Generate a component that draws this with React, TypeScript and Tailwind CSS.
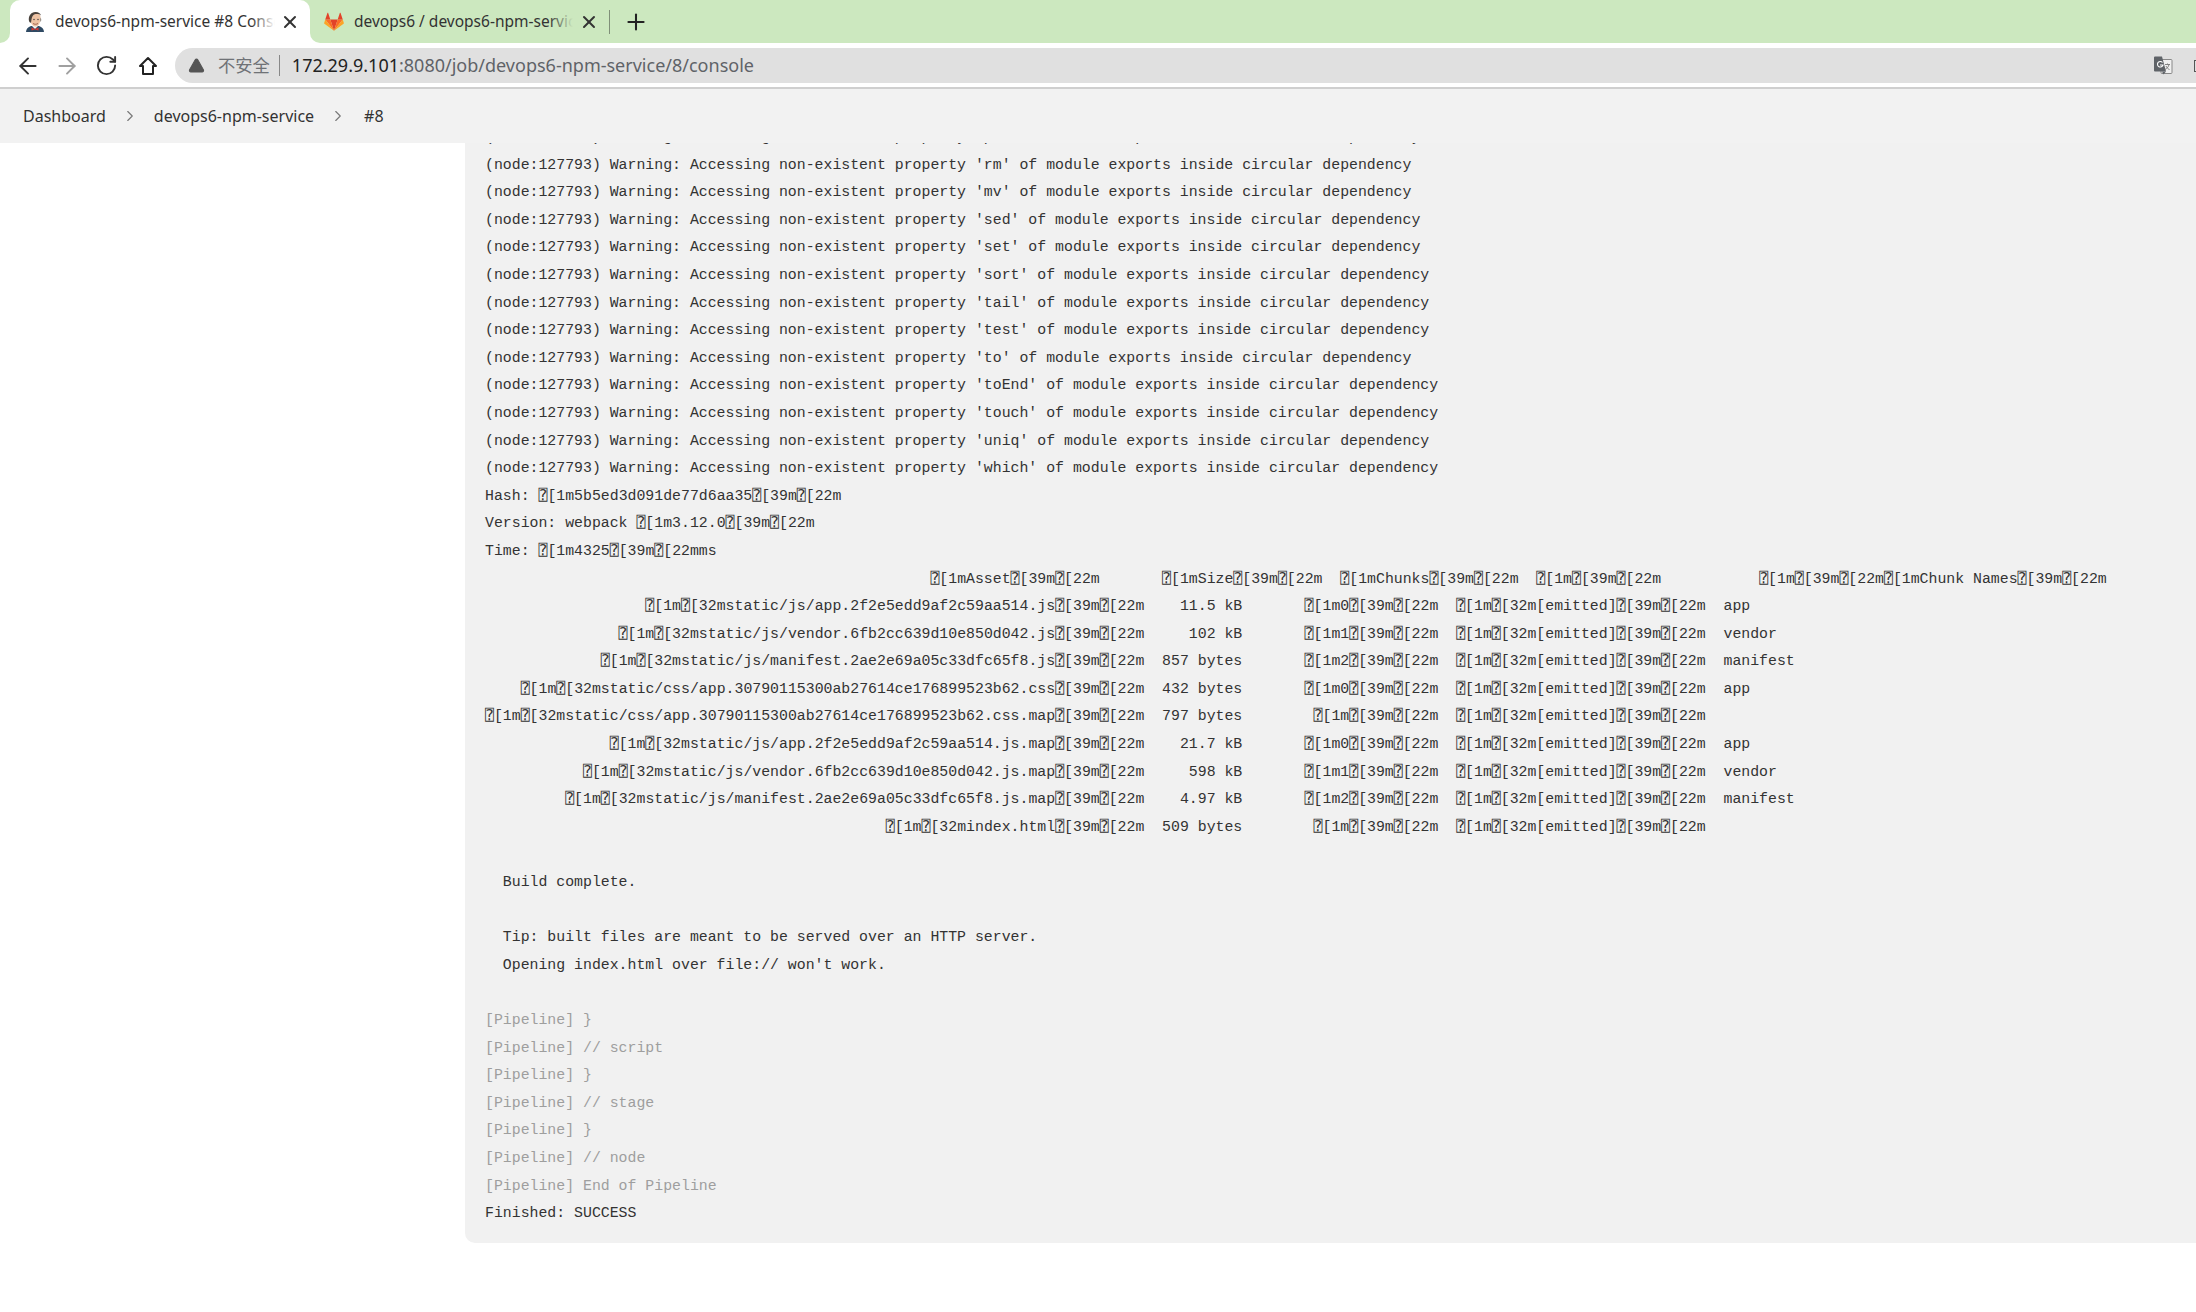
import { ArrowLeft, ArrowRight, RotateCw, X, Plus, ChevronRight, TriangleAlert } from "lucide-react";

const E = "\u2370";
const warn = (p: string) =>
  `(node:127793) Warning: Accessing non-existent property '${p}' of module exports inside circular dependency`;
const row = (asset: string, size: string, chunk: string, name: string) => {
  const a = `${E}[1m${E}[32m${asset}${E}[39m${E}[22m`.padStart(74, " ");
  const c = chunk === "" ? ` ${E}[1m${E}[39m${E}[22m` : `${E}[1m${chunk}${E}[39m${E}[22m`;
  return `${a}  ${size.padStart(9, " ")}       ${c}  ${E}[1m${E}[32m[emitted]${E}[39m${E}[22m${name ? "  " + name : ""}`;
};

type Line = { t: string; dim?: boolean };
const lines: Line[] = [
  ...["pwd", "rm", "mv", "sed", "set", "sort", "tail", "test", "to", "toEnd", "touch", "uniq", "which"].map((p) => ({ t: warn(p) })),
  { t: `Hash: ${E}[1m5b5ed3d091de77d6aa35${E}[39m${E}[22m` },
  { t: `Version: webpack ${E}[1m3.12.0${E}[39m${E}[22m` },
  { t: `Time: ${E}[1m4325${E}[39m${E}[22mms` },
  {
    t: `${" ".repeat(50)}${E}[1mAsset${E}[39m${E}[22m       ${E}[1mSize${E}[39m${E}[22m  ${E}[1mChunks${E}[39m${E}[22m  ${E}[1m${E}[39m${E}[22m           ${E}[1m${E}[39m${E}[22m${E}[1mChunk Names${E}[39m${E}[22m`,
  },
  { t: row("static/js/app.2f2e5edd9af2c59aa514.js", "11.5 kB", "0", "app") },
  { t: row("static/js/vendor.6fb2cc639d10e850d042.js", "102 kB", "1", "vendor") },
  { t: row("static/js/manifest.2ae2e69a05c33dfc65f8.js", "857 bytes", "2", "manifest") },
  { t: row("static/css/app.30790115300ab27614ce176899523b62.css", "432 bytes", "0", "app") },
  { t: row("static/css/app.30790115300ab27614ce176899523b62.css.map", "797 bytes", "", "") },
  { t: row("static/js/app.2f2e5edd9af2c59aa514.js.map", "21.7 kB", "0", "app") },
  { t: row("static/js/vendor.6fb2cc639d10e850d042.js.map", "598 kB", "1", "vendor") },
  { t: row("static/js/manifest.2ae2e69a05c33dfc65f8.js.map", "4.97 kB", "2", "manifest") },
  { t: row("index.html", "509 bytes", "", "") },
  { t: " " },
  { t: "  Build complete." },
  { t: " " },
  { t: "  Tip: built files are meant to be served over an HTTP server." },
  { t: "  Opening index.html over file:// won't work." },
  { t: " " },
  { t: "[Pipeline] }", dim: true },
  { t: "[Pipeline] // script", dim: true },
  { t: "[Pipeline] }", dim: true },
  { t: "[Pipeline] // stage", dim: true },
  { t: "[Pipeline] }", dim: true },
  { t: "[Pipeline] // node", dim: true },
  { t: "[Pipeline] End of Pipeline", dim: true },
  { t: "Finished: SUCCESS" },
];

function Jenkins() {
  return (
    <svg width="18" height="20" viewBox="0 0 18 20" className="shrink-0">
      <path d="M0 20c0-3 2-5 5-6h8c3 1 5 3 5 6z" fill="#2f4a63" />
      <path d="M6 14l3 3 3-3z" fill="#f4f4f4" />
      <path d="M5.500 15.500L9 17l3.500-1.500V18.500L9 17.500l-3.500 1z" fill="#d33833" />
      <path d="M4 6c0-3.500 2.500-5.500 5.500-5.500S15 3 14.500 7 13 14 9.500 14.500C6 14.500 4 10 4 6z" fill="#eec3a4" />
      <path d="M3 9C2 4 5 0 9.500 0 12.500 0 14.500 1.500 15 3.500 13 1.800 9 1.500 7 3.500 5.500 5 5.500 8 5 10.500 4 11 3.300 10 3 9z" fill="#49423c" />
      <path d="M14.500 5.500c1 1.500.8 3.500 0 4.500z" fill="#49423c" />
      <path d="M7 11.500c1.500 1 3.500 1 5 0" stroke="#8a4a3a" strokeWidth="0.800" fill="none" />
      <circle cx="8" cy="7.500" r="0.700" fill="#333" />
      <circle cx="12" cy="7.500" r="0.700" fill="#333" />
    </svg>
  );
}

function Gitlab() {
  return (
    <svg width="20" height="20" viewBox="0 0 24 24" className="shrink-0">
      <path d="M12 22.500l4.400-13.500H7.600z" fill="#e24329" />
      <path d="M12 22.500L7.600 9H1.500z" fill="#fc6d26" />
      <path d="M1.500 9L.2 13.100c-.1.400 0 .8.300 1L12 22.500z" fill="#fca326" />
      <path d="M1.500 9h6.100L5 1.100c-.1-.400-.7-.400-.9 0z" fill="#e24329" />
      <path d="M12 22.500L16.400 9h6.100z" fill="#fc6d26" />
      <path d="M22.500 9l1.300 4.100c.1.400 0 .8-.3 1L12 22.500z" fill="#fca326" />
      <path d="M22.500 9h-6.100L19 1.100c.1-.400.700-.400.900 0z" fill="#e24329" />
    </svg>
  );
}

function Translate() {
  return (
    <svg width="20" height="20" viewBox="0 0 20 20" className="shrink-0">
      <rect x="8" y="3.500" width="11" height="14" rx="1" fill="#f0f0f0" stroke="#888" strokeWidth="1" />
      <path d="M1 1.500a1 1 0 0 1 1-1h7l4 15H2a1 1 0 0 1-1-1z" fill="#5f6368" />
      <path d="M9 15.500l1.500 3 2.500-3z" fill="#5f6368" />
      <path d="M9.500 6.500a2.800 2.800 0 1 0 .5 2.500H7" stroke="#fff" strokeWidth="1.100" fill="none" />
      <path d="M12 8.500h5M14.500 7.500v1M16 8.500c-.5 2.500-2 4-4 5M13 10c.7 1.500 2 3 3.500 3.500" stroke="#777" strokeWidth="0.900" fill="none" />
    </svg>
  );
}

export default function App() {
  return (
    <div className="flex h-screen flex-col overflow-hidden bg-white font-['Noto_Sans','Noto_Sans_CJK_SC',sans-serif] text-[#333]">
      {/* tab strip */}
      <div className="flex h-[43px] shrink-0 items-end bg-[#cce8bf]">
        <div className="h-[43px] w-[10px] shrink-0 bg-white">
          <div className="h-full w-full rounded-br-[10px] bg-[#cce8bf]" />
        </div>
        <div className="flex h-[43px] w-[300px] shrink-0 items-center rounded-t-[10px] bg-white pl-[16px]">
          <Jenkins />
          <div className="relative ml-[11px] w-[220px] overflow-hidden whitespace-nowrap text-[15.5px] text-[#333]">
            devops6-npm-service #8 Console [Jenkins]
            <div className="absolute inset-y-0 right-0 w-6 bg-gradient-to-r from-transparent to-white" />
          </div>
          <X size={20} strokeWidth={2.400} className="ml-[5px] shrink-0 text-[#333]" />
        </div>
        <div className="h-[43px] w-[10px] shrink-0 bg-white">
          <div className="h-full w-full rounded-bl-[10px] bg-[#cce8bf]" />
        </div>
        <div className="flex h-[43px] shrink-0 items-center pl-[4px]">
          <Gitlab />
          <div className="relative ml-[10px] w-[219px] shrink-0 overflow-hidden whitespace-nowrap text-[15.5px] text-[#333]">
            devops6 / devops6-npm-service · GitLab
            <div className="absolute inset-y-0 right-0 w-6 bg-gradient-to-r from-transparent to-[#cce8bf]" />
          </div>
          <X size={20} strokeWidth={2.400} className="ml-[6px] shrink-0 text-[#333]" />
          <div className="ml-[10px] h-[24px] w-px bg-[#7f8f78]" />
          <Plus size={26} strokeWidth={1.900} className="ml-[13px] shrink-0 text-[#222]" />
        </div>
      </div>

      {/* toolbar */}
      <div className="flex h-[46px] shrink-0 items-center border-b-2 border-[#cfcfcf] bg-white pt-[1px] pl-[15px]">
        <ArrowLeft size={26} strokeWidth={1.800} className="shrink-0 text-[#333]" />
        <ArrowRight size={26} strokeWidth={1.800} className="ml-[13px] shrink-0 text-[#a0a0a0]" />
        <RotateCw size={23} strokeWidth={2} className="ml-[15px] shrink-0 text-[#333]" />
        <svg width="22" height="22" viewBox="0 0 22 22" className="ml-[19px] shrink-0">
          <path d="M11 3L3 11h3v8h10v-8h3z" fill="none" stroke="#222" strokeWidth="2" strokeLinejoin="round" />
        </svg>
        <div className="ml-[16px] flex h-[35px] min-w-0 flex-1 items-center justify-between rounded-l-full bg-[#e0e0e0] pl-[13px] text-[18px]">
          <div className="flex items-center whitespace-nowrap">
            <TriangleAlert size={17} fill="#555" strokeWidth={1.500} className="shrink-0 text-[#555]" />
            <span className="ml-[13px] text-[17.300px] text-[#6f7276]">不安全</span>
            <span className="ml-[9px] h-[21px] w-px bg-[#888]" />
            <span className="ml-[12px] text-[#222]">172.29.9.101</span>
            <span className="text-[#5f6368]">:8080/job/devops6-npm-service/8/console</span>
          </div>
          <div className="flex items-center">
            <Translate />
            <div className="ml-[21px] h-[12px] w-[2px] border-y border-l border-[#555]" />
          </div>
        </div>
      </div>

      {/* breadcrumb */}
      <div className="flex h-[54px] shrink-0 items-center bg-[#f2f2f2] pl-[23px] text-[16px] text-[#333]">
        <span>Dashboard</span>
        <ChevronRight size={18} strokeWidth={1.500} className="ml-[15px] text-[#777]" />
        <span className="ml-[15px]">devops6-npm-service</span>
        <ChevronRight size={18} strokeWidth={1.500} className="ml-[15px] text-[#777]" />
        <span className="ml-[17px]">#8</span>
      </div>

      {/* body */}
      <div className="flex min-h-0 flex-1 items-start">
        <div className="w-[465px] shrink-0" />
        <div className="h-[1100px] min-w-0 flex-1 overflow-hidden rounded-bl-[10px] bg-[#f1f1f1] pl-[20px]">
          <pre className="-mt-[19px] font-['Liberation_Mono','DejaVu_Sans_Mono',monospace] text-[14.85px] leading-[27.6px] text-[#333]">
            {lines.map((l, i) => (
              <div key={i} className={l.dim ? "text-[#9e9e9e]" : undefined}>
                {l.t}
              </div>
            ))}
          </pre>
        </div>
      </div>
    </div>
  );
}
